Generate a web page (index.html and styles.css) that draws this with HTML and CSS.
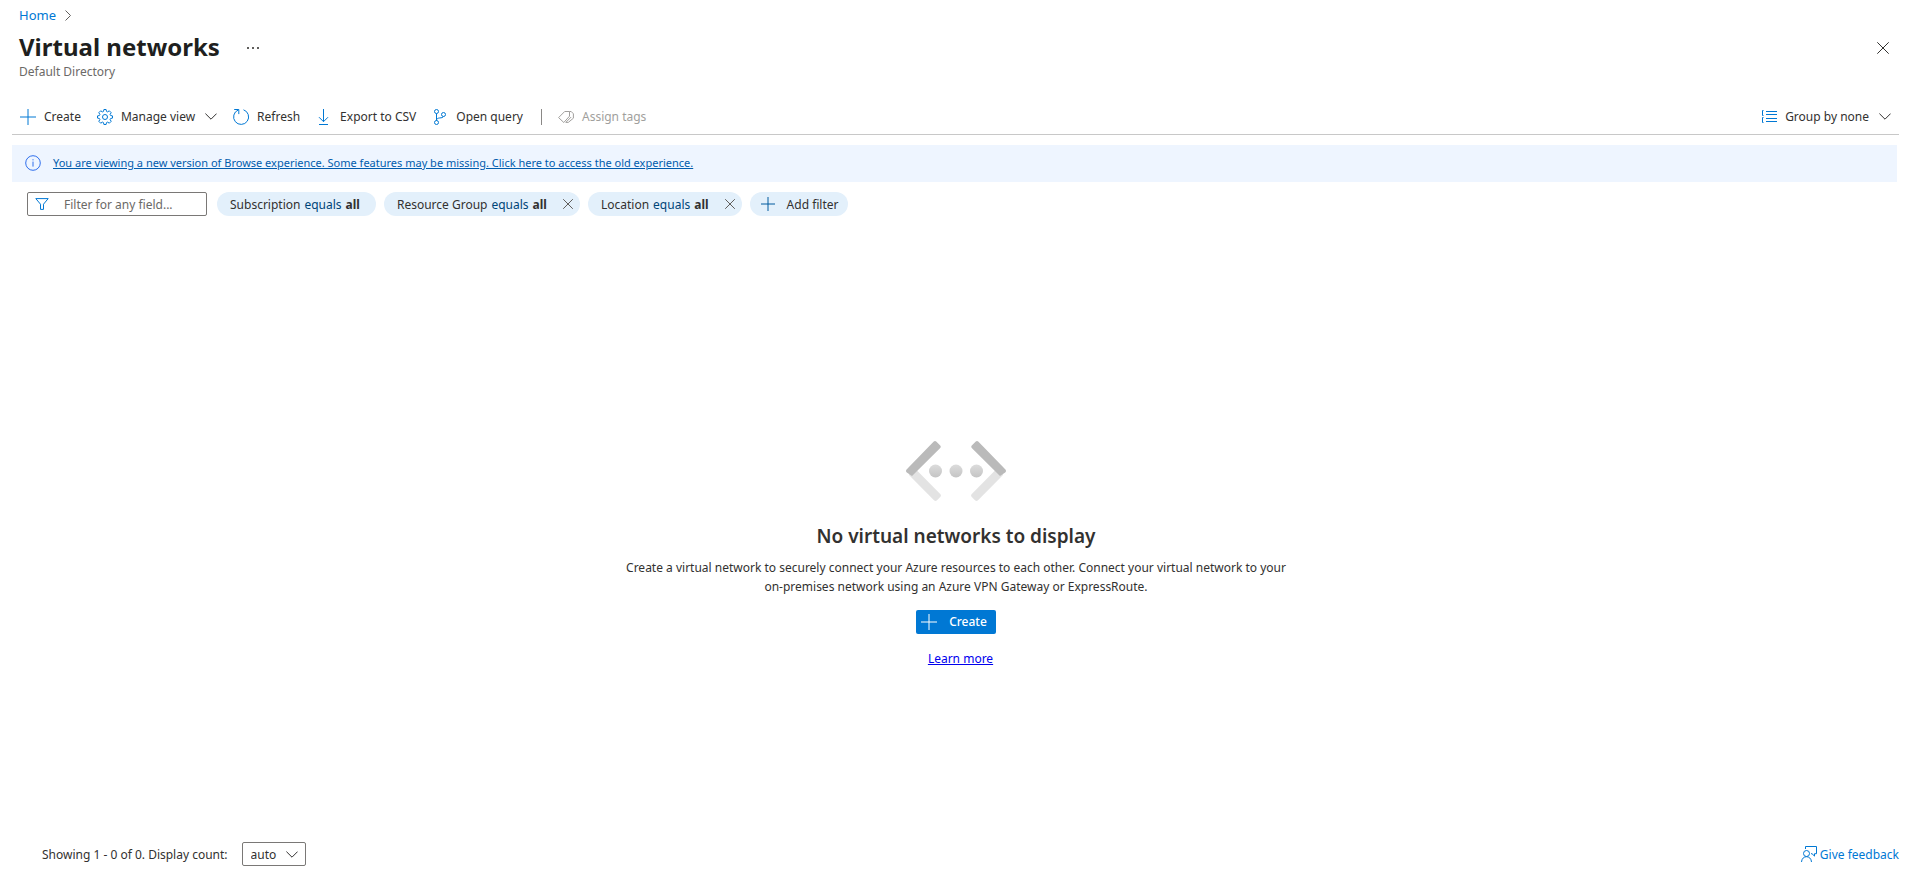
FILE: index.html
```html
<!DOCTYPE html>
<html lang="en">
<head>
<meta charset="utf-8">
<title>Virtual networks</title>
<link rel="stylesheet" href="styles.css">
</head>
<body>
<div class="page">
  <header class="header">
    <nav class="breadcrumb" aria-label="Breadcrumb">
      <a class="breadcrumb-link" href="#">Home</a>
      <svg class="breadcrumb-arrow" viewBox="0 0 6 11" aria-hidden="true"><path d="M.5.5 5.500 5.500.5 10.500"/></svg>
    </nav>
    <div class="title-row">
      <h1 class="title">Virtual networks</h1>
      <button class="icon-button more" aria-label="More">
        <svg viewBox="0 0 12 2" aria-hidden="true"><path d="M0 0h2v2H0zM5 0h2v2H5zM10 0h2v2h-2z"/></svg>
      </button>
      <button class="icon-button close" aria-label="Close">
        <svg viewBox="0 0 12 12" aria-hidden="true"><path d="M.3.3l11.400 11.400M11.700.3.3 11.700"/></svg>
      </button>
    </div>
    <p class="subtitle">Default Directory</p>
  </header>

  <div class="toolbar" role="toolbar" aria-label="Commands">
    <button class="command">
      <svg class="icon plus" viewBox="0 0 16 16" aria-hidden="true"><path d="M8 0v16M0 8h16"/></svg>
      Create
    </button>
    <button class="command">
      <svg class="icon" viewBox="0 0 16 16" aria-hidden="true"><path d="M6.900.5h2.200l.4 1.900 1.100.5 1.700-1.100 1.900 1.900-1.100 1.700.5 1.100 1.900.4v2.200l-1.900.4-.5 1.100 1.100 1.700-1.900 1.900-1.700-1.100-1.100.5-.4 1.900H6.900l-.4-1.900-1.100-.5-1.700 1.100-1.900-1.900 1.100-1.700-.5-1.100-1.900-.4V6.900l1.900-.4.5-1.100-1.100-1.700 1.900-1.900 1.700 1.100 1.100-.5z"/><circle cx="8" cy="8" r="2.500"/></svg>
      Manage view
      <svg class="chevron" viewBox="0 0 12 7" aria-hidden="true"><path d="M.4.6 6 6.200 11.600.6"/></svg>
    </button>
    <button class="command">
      <svg class="icon" viewBox="0 0 16 16" aria-hidden="true"><path d="M10.500.8A7.500 7.500 0 1 1 5.200 1M1.200.5h4.600v4.600"/></svg>
      Refresh
    </button>
    <button class="command">
      <svg class="icon" viewBox="0 0 16 16" aria-hidden="true"><path d="M7.500 0v12.500M3 8.200l4.500 4.500L12 8.200M3 15.500h9"/></svg>
      Export to CSV
    </button>
    <button class="command">
      <svg class="icon" viewBox="0 0 16 16" aria-hidden="true"><circle cx="4.500" cy="2.500" r="2"/><circle cx="4.500" cy="13.500" r="2"/><circle cx="11.500" cy="5.500" r="2"/><path d="M4.500 4.500v7M11.300 7.500c-.3 2.500-6.800 0-6.800 4"/></svg>
      Open query
    </button>
    <span class="separator"></span>
    <button class="command" disabled>
      <svg class="icon" viewBox="0 0 16 16" aria-hidden="true"><path d="M6.700 2.500H11.500V7.200L5.800 13.500.6 8.600zM11.500 2.500h1.700l2.200 2.300v4.400L10.300 13.400H7.800L13.200 8"/></svg>
      Assign tags
    </button>
    <button class="command group-by">
      <svg class="icon" viewBox="0 0 16 16" aria-hidden="true"><path d="M2.500 1.500h-1v5h1M2.500 8.500h-1v5h1M5 2.500h11M5 5.500h11M5 9.500h11M5 12.500h11"/></svg>
      Group by none
      <svg class="chevron" viewBox="0 0 12 7" aria-hidden="true"><path d="M.4.6 6 6.200 11.600.6"/></svg>
    </button>
  </div>

  <div class="banner">
    <svg class="banner-icon" viewBox="0 0 16 16" aria-hidden="true"><circle cx="8" cy="8" r="7.300"/><path d="M8 6.600v5M8 4.200v1.200"/></svg>
    <a class="banner-link" href="#">You are viewing a new version of Browse experience. Some features may be missing. Click here to access the old experience.</a>
  </div>

  <div class="filters">
    <label class="search">
      <svg class="search-icon" viewBox="0 0 14 12" aria-hidden="true"><path d="M.8.6h12.400L8.500 6.200v5.200h-3V6.200z"/></svg>
      <input class="search-input" type="text" placeholder="Filter for any field..." aria-label="Filter for any field">
    </label>
    <button class="pill">Subscription <span class="operator">equals</span> <b>all</b></button>
    <div class="pill">
      <button class="pill-text">Resource Group <span class="operator">equals</span> <b>all</b></button>
      <button class="pill-remove" aria-label="Remove Resource Group filter"><svg viewBox="0 0 10 10" aria-hidden="true"><path d="M.2.2l9.600 9.600M9.800.2.2 9.800"/></svg></button>
    </div>
    <div class="pill">
      <button class="pill-text">Location <span class="operator">equals</span> <b>all</b></button>
      <button class="pill-remove" aria-label="Remove Location filter"><svg viewBox="0 0 10 10" aria-hidden="true"><path d="M.2.2l9.600 9.600M9.800.2.2 9.800"/></svg></button>
    </div>
    <button class="pill add">
      <svg class="add-icon" viewBox="0 0 14 14" aria-hidden="true"><path d="M7 0v14M0 7h14"/></svg>
      Add filter
    </button>
  </div>

  <main class="empty">
    <svg class="empty-icon" viewBox="0 0 100 60" aria-hidden="true">
      <defs><linearGradient id="dot" x1="0" y1="0" x2="0" y2="1"><stop offset="0" stop-color="#dcdcdc"/><stop offset="1" stop-color="#c4c4c4"/></linearGradient></defs>
      <g fill="#e3e3e3">
        <path d="M3 32 10 28.500 34.200 53q1.500 1.500 0 3L31 59.200q-1.500 1.500-3 0L3 34z"/>
        <path d="M97 32 90 28.500 65.800 53q-1.500 1.500 0 3L69 59.200q1.500 1.500 3 0L97 34z"/>
      </g>
      <g fill="#bababa">
        <path d="M27.500.8q1.500-1.500 3 0L34 4.200q1.500 1.500 0 3L6 35 .8 31.500q-1.600-1.600 0-3.200z"/>
        <path d="M72.500.8q-1.500-1.500-3 0L66 4.200q-1.500 1.500 0 3L94 35 99.200 31.500q1.600-1.600 0-3.200z"/>
      </g>
      <g fill="url(#dot)"><circle cx="29.500" cy="30" r="6.500"/><circle cx="50" cy="30" r="6.500"/><circle cx="70.500" cy="30" r="6.500"/></g>
    </svg>
    <h2 class="empty-title">No virtual networks to display</h2>
    <p class="empty-text">Create a virtual network to securely connect your Azure resources to each other. Connect your virtual network to your on-premises network using an Azure VPN Gateway or ExpressRoute.</p>
    <button class="primary">
      <svg class="icon plus" viewBox="0 0 16 16" aria-hidden="true"><path d="M8 0v16M0 8h16"/></svg>
      Create
    </button>
    <a class="learn-more" href="#">Learn more</a>
  </main>

  <footer class="footer">
    <label class="count-label" for="count">Showing 1 - 0 of 0. Display count:</label>
    <span class="select-box">
      <select class="select" id="count"><option>auto</option><option>10</option><option>20</option><option>50</option></select>
      <svg class="select-arrow" viewBox="0 0 12 7" aria-hidden="true"><path d="M.4.6 6 6.200 11.600.6"/></svg>
    </span>
    <a class="feedback" href="#">
      <svg class="icon" viewBox="0 0 16 16" aria-hidden="true"><circle cx="5.500" cy="7.500" r="3"/><path d="M.5 16C.7 12.500 3 10.700 5.500 10.700S10.300 12.500 10.500 16M4.500 3V.5h11v7.200h-2v2.400L11 7.700h-1"/></svg>
      Give feedback
    </a>
  </footer>
</div>
</body>
</html>
```

FILE: styles.css
```css
* { box-sizing: border-box; }

body {
  margin: 0;
  background: #fff;
  color: #323130;
  font: 12px/19px "Noto Sans", "Open Sans", sans-serif;
}

button, input, select { font: inherit; color: inherit; }
button { margin: 0; padding: 0; border: 0; background: none; white-space: nowrap; cursor: pointer; }
p, h1, h2 { margin: 0; }
svg { display: block; flex: none; fill: none; stroke: currentColor; }
a { color: #0078d4; }

.page { display: flex; flex-direction: column; min-height: 100vh; }

.header { padding: 6px 29px 0 19px; }
.breadcrumb { display: flex; align-items: center; gap: 9px; font-size: 13px; line-height: 18px; }
.breadcrumb-link { text-decoration: none; }
.breadcrumb-arrow { width: 6px; height: 11px; color: #605e5c; }
.title-row { display: flex; align-items: center; margin-top: 7px; }
.title { color: #201f1e; font-size: 24px; line-height: 32px; font-weight: 700; }
.icon-button { padding-top: 2px; color: #323130; }
.more { margin-left: 27px; }
.more svg { width: 12px; height: 2px; fill: #605e5c; stroke: none; }
.close { margin-left: auto; }
.close svg { width: 12px; height: 12px; }
.subtitle { margin-top: 1px; color: #6b6967; line-height: 16px; }

.toolbar {
  display: flex;
  align-items: center;
  gap: 16px;
  height: 36px;
  margin: 19px 19px 0 12px;
  padding: 0 8px;
  border-bottom: 1px solid #c8c8c8;
}
.command { display: flex; align-items: center; gap: 8px; }
.command .icon { color: #0078d4; }
.icon { width: 16px; height: 16px; }
.chevron { width: 12px; height: 7px; margin-left: 2px; color: #323130; }
.command:disabled, .command:disabled .icon { color: #a19f9d; cursor: default; }
.separator { width: 1px; height: 16px; margin-left: 2px; background: #8a8886; }
.group-by { margin-left: auto; }

.banner {
  display: flex;
  align-items: center;
  gap: 12px;
  margin: 10px 21px 0 12px;
  padding: 10px 13px 11px;
  background: #eef5ff;
  font-size: 11px;
  line-height: 16px;
}
.banner-icon { width: 16px; height: 16px; color: #2f6fed; }
.banner-link { color: #015cad; }

.filters { display: flex; gap: 8px; padding: 10px 27px 0; }
.search {
  display: flex;
  align-items: center;
  gap: 15px;
  width: 180px;
  height: 24px;
  margin-right: 2px;
  padding: 0 7px;
  border: 1px solid #7a7876;
  border-radius: 2px;
}
.search-icon { width: 14px; height: 12px; color: #0078d4; }
.search-input { flex: 1; min-width: 0; height: 19px; padding: 0; border: 0; outline: 0; background: none; }
.search-input::placeholder { color: #6b6967; }
.pill {
  display: flex;
  align-items: center;
  gap: 4px;
  height: 24px;
  padding: 0 16px 0 13px;
  border-radius: 12px;
  background: #e3f0fb;
}
div.pill { gap: 16px; padding-right: 7px; }
.pill-text { display: flex; gap: 4px; }
.operator { color: #004578; }
.pill-remove svg { width: 10px; height: 10px; color: #605e5c; }
.add { gap: 12px; padding: 0 9px 0 11px; }
.add-icon { width: 14px; height: 14px; color: #005a9e; }

.empty {
  flex: 1;
  display: flex;
  flex-direction: column;
  align-items: center;
  justify-content: center;
  padding: 50px 24px 0 18px;
}
.empty-icon { width: 100px; height: 60px; stroke: none; }
.empty-title { margin-top: 22px; font-size: 19px; line-height: 26px; font-weight: 600; }
.empty-text { max-width: 675px; margin-top: 9px; text-align: center; }
.primary {
  display: flex;
  align-items: center;
  gap: 12px;
  height: 24px;
  margin-top: 14px;
  padding: 0 9px 0 5px;
  border-radius: 2px;
  background: #0078d4;
  color: #fff;
  font-weight: 500;
}
.learn-more { margin: 15px 0 0 9px; color: #0000ee; }

.footer { display: flex; align-items: center; gap: 14px; padding: 0 19px 21px 42px; }
.select-box { position: relative; }
.select {
  display: block;
  width: 64px;
  height: 24px;
  padding: 0 8px;
  border: 1px solid #7a7876;
  border-radius: 2px;
  background: #fff;
  appearance: none;
}
.select-arrow { position: absolute; top: 9px; right: 8px; width: 12px; height: 7px; pointer-events: none; }
.feedback { display: flex; align-items: center; gap: 3px; margin-left: auto; text-decoration: none; }
```
